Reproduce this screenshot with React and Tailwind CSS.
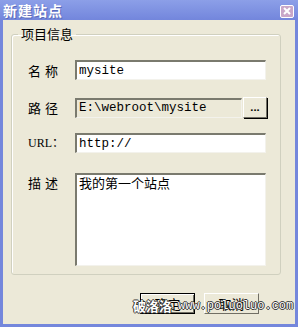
const cjk = { fontFamily: '"Noto Sans CJK SC", "Noto Sans", sans-serif' };

function Field({ label, children }) {
    return (
        <div className="flex items-center">
            <div className="w-[63px] pl-[16px] whitespace-nowrap text-[13px] leading-none text-black tracking-[4px]" style={cjk}>{label}</div>
            {children}
        </div>
    );
}

const inputCls = 'h-[20px] border-t-2 border-l-2 border-t-[#7a7a6e] border-l-[#7a7a6e] border-b border-r border-b-[#f3f2ec] border-r-[#f3f2ec] px-[2px] text-[12.5px] leading-none font-["Liberation_Mono",monospace] text-black outline-none';

export default function App() {
    return (
        <div className="w-[298px] h-[327px] bg-[#7487dc] flex flex-col overflow-hidden select-none">
            {/* title bar */}
            <div className="h-[20px] flex items-center justify-between pl-[3px] pr-[4px] bg-gradient-to-b from-[#8c9fe8] to-[#7386dc]">
                <span className="text-white font-bold text-[14px] leading-none tracking-[1px] [text-shadow:1px_1px_0_#5a6bb8]" style={cjk}>新建站点</span>
                <div className="w-[14px] h-[13px] mt-[2px] rounded-[2px] border border-white bg-[#c9a7c8] flex items-center justify-center">
                    <svg width="8" height="8" viewBox="0 0 8 8">
                        <path d="M1 1 L7 7 M7 1 L1 7" stroke="white" strokeWidth="2" />
                    </svg>
                </div>
            </div>

            {/* body */}
            <div className="flex-1 mx-[3px] mb-[3px] bg-[#ece9d8] relative flex flex-col pt-[7px] pl-[8px]">
                <fieldset className="w-[270px] h-[248px] border border-[#d0d0bf] rounded-[3px] shadow-[inset_1px_1px_0_#fff] px-0 pb-0">
                    <legend className="ml-[6px] px-[3px] text-[13px] leading-[14px] text-black" style={cjk}>项目信息</legend>
                    <div className="flex flex-col mt-[19px]">
                        <Field label="名称">
                            <input readOnly value="mysite" className={`${inputCls} w-[191px] bg-white`} />
                        </Field>
                        <div className="mt-[17px]">
                            <Field label="路径">
                                <input readOnly value="E:\webroot\mysite" className={`${inputCls} w-[167px] bg-[#ece9d8]`} />
                                <button className="ml-[1px] w-[24px] h-[21px] border border-t-white border-l-white border-b-[#716f64] border-r-[#716f64] bg-[#ece9d8] shadow-[1px_1px_0_#000] text-[11px] font-bold leading-none pb-[3px]">...</button>
                            </Field>
                        </div>
                        <div className="mt-[15px]">
                            <div className="flex items-center">
                                <div className="w-[63px] pl-[16px] whitespace-nowrap text-[12px] leading-none text-black" style={{ fontFamily: '"Liberation Serif", "Noto Sans CJK SC", serif' }}>URL：</div>
                                <input readOnly value="http://" className={`${inputCls} w-[191px] bg-white`} />
                            </div>
                        </div>
                        <div className="mt-[20px] flex items-start">
                            <div className="w-[63px] pl-[16px] pt-[3px] whitespace-nowrap text-[13px] leading-none text-black tracking-[4px]" style={cjk}>描述</div>
                            <textarea readOnly value="我的第一个站点" className="w-[191px] h-[93px] resize-none bg-white border-t-2 border-l-2 border-t-[#7a7a6e] border-l-[#7a7a6e] border-b border-r border-b-[#f3f2ec] border-r-[#f3f2ec] px-[2px] text-[13px] leading-[15px] text-black outline-none overflow-hidden" style={cjk} />
                        </div>
                    </div>
                </fieldset>

                <div className="flex gap-[9px] mt-[18px] ml-[129px]">
                    <button className="w-[55px] h-[21px] border border-black bg-[#ece9d8] shadow-[inset_1px_1px_0_#fff,inset_-1px_-1px_0_#716f64] text-[13px] leading-none text-black" style={cjk}>确定</button>
                    <button className="w-[55px] h-[21px] border border-t-white border-l-white border-b-[#716f64] border-r-[#716f64] bg-[#ece9d8] text-[13px] leading-none text-black" style={cjk}>取消</button>
                </div>

                {/* watermark */}
                <div className="absolute left-[130px] top-[279px] flex items-center gap-[6px] pointer-events-none text-white [text-shadow:1px_0_0_#333,-1px_0_0_#333,0_1px_0_#333,0_-1px_0_#333]">
                    <span className="text-[13px] font-bold leading-none" style={cjk}>破洛洛</span>
                    <span className="text-[12px] leading-none font-['Liberation_Mono',monospace]">www.poluoluo.com</span>
                </div>
            </div>
        </div>
    );
}
